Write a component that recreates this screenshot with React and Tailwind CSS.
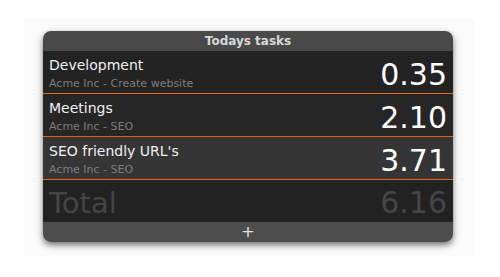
import React from 'react';

const tasks = [
  { title: 'Development', sub: 'Acme Inc - Create website', value: '0.35', bg: 'bg-[#232323]' },
  { title: 'Meetings', sub: 'Acme Inc - SEO', value: '2.10', bg: 'bg-[#262626]' },
  { title: "SEO friendly URL's", sub: 'Acme Inc - SEO', value: '3.71', bg: 'bg-[#353535]' },
];

function TaskRow({ task }) {
  return (
    <div className={`${task.bg} h-[43px] border-b border-[#e8650f] flex items-start justify-between px-[6px]`}>
      <div className="flex flex-col pt-[5px]">
        <span className="text-[14px] leading-[18px] text-[#f0f0f0]">{task.title}</span>
        <span className="text-[11px] leading-[14px] mt-[3px] text-[#7d7d7d]">{task.sub}</span>
      </div>
      <span className="text-[30px] leading-[30px] mt-[9px] text-white">{task.value}</span>
    </div>
  );
}

export default function App() {
  return (
    <div className="w-[500px] h-[277px] bg-white pt-[19px] pl-[24px]" style={{ fontFamily: '"DejaVu Sans", Verdana, sans-serif' }}>
      <div className="w-[450px] h-[237px] bg-[#fafafa] pt-[12px] pl-[19px]">
        <div className="w-[410px] rounded-[8px] overflow-hidden shadow-[0_3px_6px_rgba(0,0,0,0.55)]">
          {/* header */}
          <div className="h-[20px] bg-[#4a4a4a] flex items-center justify-center">
            <span className="text-[12px] font-bold text-[#d8d8d8]">Todays tasks</span>
          </div>

          {tasks.map((t) => (
            <TaskRow key={t.title} task={t} />
          ))}

          {/* total */}
          <div className="h-[42px] bg-[#222222] flex items-start justify-between px-[6px]">
            <span className="text-[29px] leading-[30px] mt-[8px] text-[#454545]">Total</span>
            <span className="text-[30px] leading-[30px] mt-[8px] text-[#454545]">6.16</span>
          </div>

          {/* footer */}
          <div className="h-[20px] bg-[#4d4d4d] flex items-center justify-center">
            <span className="text-[16px] leading-none text-[#e0e0e0]">+</span>
          </div>
        </div>
      </div>
    </div>
  );
}
